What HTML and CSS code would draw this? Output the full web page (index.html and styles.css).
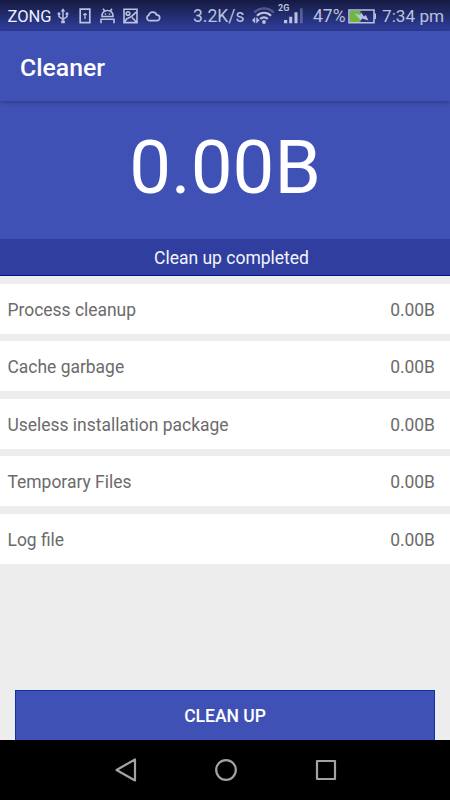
FILE: index.html
```html
<!DOCTYPE html>
<html lang="en">
<head>
<meta charset="utf-8">
<title>Cleaner</title>
<link rel="stylesheet" href="styles.css">
</head>
<body>
<div class="screen">
  <div class="status">
    <span class="carrier">ZONG</span>
    <svg class="usb" width="12" height="16" viewBox="0 0 12 16" fill="none" stroke="currentColor" stroke-width="1.5"><path d="M6 2v12M2 6v2.500l4 3M10 5v3.500L6 11.500"/><path d="M6 .3 8.300 3.600H3.700zM4.200 12.500h3.600v2.800H4.200zM.7 4.500h2.600v2.600H.7zM8.700 4.500h2.600v2.600H8.700z" fill="currentColor" stroke="none"/></svg>
    <svg class="sim" width="12" height="16" viewBox="0 0 12 16" fill="none" stroke="currentColor" stroke-width="1.700"><path d="M1.200 1.200h9.600v13.400H1.200z"/><path d="M6 5.300v5.700M4.300 7l1.700-1.500L7.700 7" stroke-width="1.300"/></svg>
    <svg class="droid" width="15" height="16" viewBox="0 0 15 16" fill="none" stroke="currentColor" stroke-width="1.600"><path d="M2 8.500V7.500a5.500 5 0 0 1 11 0v1zM3 .8l2 2.400M12 .8 10 3.200M1 15.300v-4.100h13v4.100"/><path d="M4.800 6h1.400M8.800 6h1.400" stroke-width="1.400"/></svg>
    <svg class="photo" width="15" height="16" viewBox="0 0 15 16" fill="none" stroke="currentColor" stroke-width="1.600"><path d="M1 1.200h13v13.400H1zM1.500 14c1.500-3.500 3.500-4 5-4.500C10 8.500 11 5 13.500 4M9 9.500l4.500 4.500"/><circle cx="5" cy="5.500" r="1.800"/></svg>
    <svg class="cloud" width="16" height="12" viewBox="0 0 16 12" fill="none" stroke="currentColor" stroke-width="1.700"><path d="M4 10.600a2.900 2.900 0 0 1-.2-5.500 4.100 4.100 0 0 1 7.800-.2c4 .1 4.100 5.700.4 5.700z"/></svg>
    <span class="speed">3.2K/s</span>
    <svg class="wifi" width="24" height="18" viewBox="0 0 24 18" fill="none" stroke="currentColor" stroke-width="2.200"><path d="M2.200 5.500a13.600 13.600 0 0 1 19.600 0" opacity=".35"/><path d="M5 8.700a9.800 9.800 0 0 1 14 0M8.200 12a5.400 5.400 0 0 1 7.600 0"/><circle cx="12" cy="15" r="1.900" fill="currentColor" stroke="none"/><path d="M0 13.200 3.200 10v6.400zM7.500 13.200 4.300 10v6.400z" fill="currentColor" stroke="none"/></svg>
    <span class="signal"><span class="net">2G</span><svg width="20" height="16" viewBox="0 0 20 16" fill="currentColor"><path d="M1 12h3.200v3.300H1zM6.200 8.800h3v6.500h-3zM11.500 4.300h3v11h-3z"/><path d="M17 .3h2.700v15H17z" opacity=".35"/></svg></span>
    <span class="percent">47%</span>
    <svg class="battery" width="29" height="15" viewBox="0 0 29 15"><path d="M2 2h10.500v11H2z" fill="#70b83c"/><path d="M1 1h25v12.700H1z" fill="none" stroke="currentColor" stroke-width="1.600"/><path d="M26.500 4.500H28v5.500h-1.500z" fill="currentColor"/><path d="M6.500 4.500 12 6l1-2.700 3 4.200 1.800-1.500 2.700 5.500-6.300-2-1.200 2z" fill="currentColor"/></svg>
    <span class="time">7:34 pm</span>
  </div>
  <header class="toolbar">Cleaner</header>
  <section class="total">0.00B</section>
  <div class="message">Clean up completed</div>
  <ul class="list">
    <li class="row"><span>Process cleanup</span><span>0.00B</span></li>
    <li class="row"><span>Cache garbage</span><span>0.00B</span></li>
    <li class="row"><span>Useless installation package</span><span>0.00B</span></li>
    <li class="row"><span>Temporary Files</span><span>0.00B</span></li>
    <li class="row"><span>Log file</span><span>0.00B</span></li>
  </ul>
  <button class="action">CLEAN UP</button>
  <nav class="nav">
    <svg width="24" height="26" viewBox="0 0 24 26"><path d="M21 2.500v21L2.500 13z"/></svg>
    <svg width="24" height="26" viewBox="0 0 24 26"><circle cx="12" cy="13" r="9.800"/></svg>
    <svg width="24" height="26" viewBox="0 0 24 26"><path d="M3 4h18v18H3z"/></svg>
  </nav>
</div>
</body>
</html>
```
FILE: styles.css
```css
* { box-sizing: border-box; }
body { margin: 0; font-family: Roboto, "Liberation Sans", sans-serif; }
.screen {
  width: 450px;
  height: 800px;
  display: flex;
  flex-direction: column;
  background: #ededed;
  overflow: hidden;
}
.status {
  height: 31px;
  flex: none;
  display: flex;
  align-items: center;
  padding: 1px 0 0 7.5px;
  background: linear-gradient(#151a40, #303f9f);
  color: #bcc1dd;
  font-size: 17.5px;
  white-space: nowrap;
}
.status svg { flex: none; display: block; }
.status > span { flex: none; }
.carrier { width: 49.500px; font-size: 16.5px; color: #eef0fb; }
.usb { margin-right: 10px; }
.sim { margin-right: 9px; }
.droid { margin-right: 8px; }
.photo { margin-right: 7px; }
.cloud { margin-right: 32px; }
.speed { width: 59px; }
.wifi { margin-right: 2px; }
.signal { position: relative; width: 35px; padding-left: 5px; }
.net {
  position: absolute;
  left: 0;
  top: -4px;
  font-size: 9px;
  line-height: 9px;
  font-weight: 700;
}
.percent { width: 35px; }
.battery { margin-right: 5px; }
.time { font-size: 17.2px; }
.toolbar {
  position: relative;
  height: 70px;
  flex: none;
  padding-left: 20px;
  line-height: 73px;
  font-size: 24.8px;
  font-weight: 500;
  color: #fff;
  background: #3f51b5;
  box-shadow: 0 1px 5px rgba(0, 0, 0, .35);
}
.total {
  height: 138px;
  flex: none;
  line-height: 133px;
  text-align: center;
  font-size: 74.5px;
  color: #fff;
  background: #3f51b5;
}
.message {
  height: 37px;
  flex: none;
  padding-left: 13px;
  line-height: 39px;
  text-align: center;
  font-size: 17.5px;
  color: #f3f4fc;
  background: #303f9f;
  border-bottom: 1px solid #001689;
}
.list {
  flex: 1;
  display: flex;
  flex-direction: column;
  gap: 7.5px;
  margin: 0;
  padding: 7.8px 0 0;
  list-style: none;
}
.row {
  height: 50px;
  display: flex;
  justify-content: space-between;
  align-items: center;
  padding: 2px 15px 0 7.5px;
  background: #fff;
  font-size: 17.45px;
  color: #6b6b6b;
}
.action {
  height: 50px;
  flex: none;
  margin: 0 15px;
  padding: 0;
  border: 1px solid #0a33ab;
  border-bottom: 0;
  border-radius: 0;
  background: #3f51b5;
  color: #fff;
  font: 500 17.5px Roboto, "Liberation Sans", sans-serif;
}
.nav {
  height: 60px;
  flex: none;
  display: flex;
  justify-content: center;
  align-items: center;
  gap: 76px;
  padding-left: 1px;
  background: #000;
}
.nav svg {
  fill: none;
  stroke: #a3a3a3;
  stroke-width: 2.2;
  stroke-linejoin: round;
}
```
